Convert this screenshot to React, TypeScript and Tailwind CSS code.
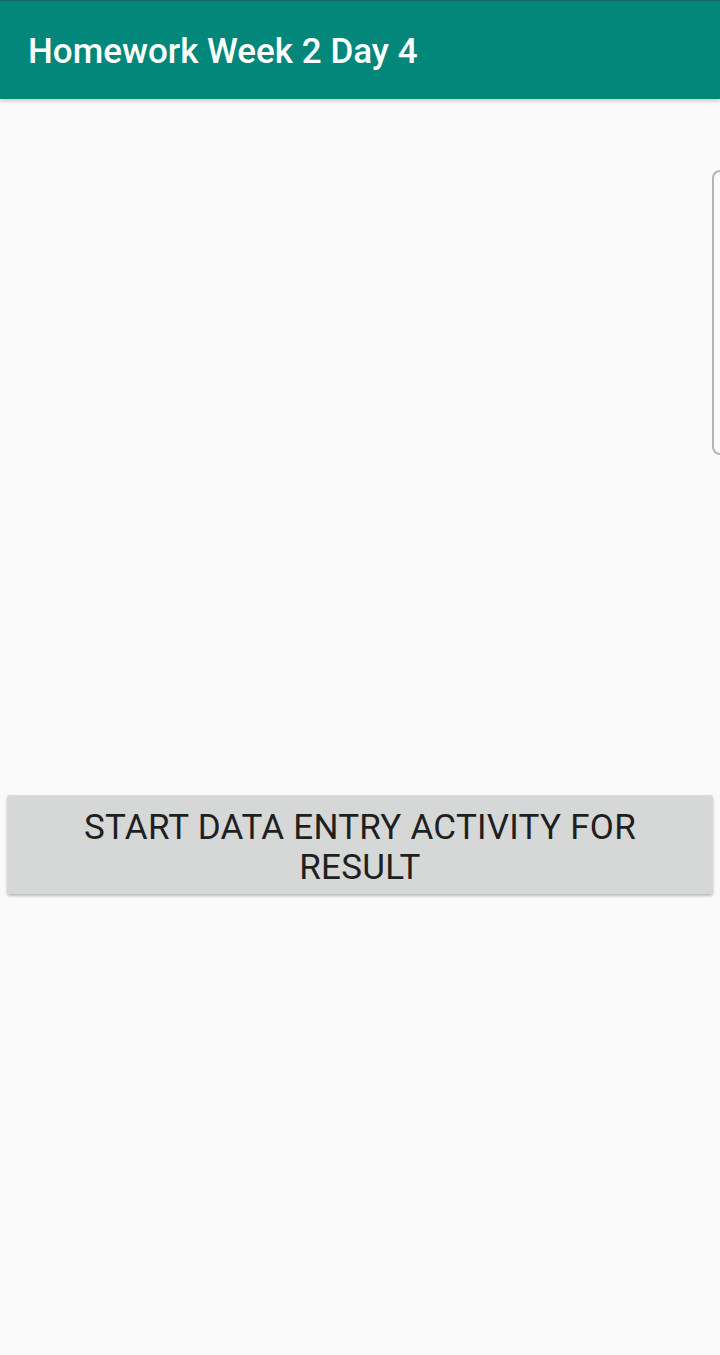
import React from "react";

export default function App() {
  return (
    <div className="relative w-[720px] h-[1355px] bg-[#fafafa] overflow-hidden flex flex-col" style={{ fontFamily: "Roboto, 'Noto Sans', sans-serif" }}>
      <div className="h-[99px] bg-[#02877a] border-t border-[#1a6a61] flex items-center pl-[28px] shadow-[0_2px_4px_rgba(0,0,0,0.2)] z-10 shrink-0">
        <span className="text-white text-[35px] font-medium leading-none pt-[2px]">Homework Week 2 Day 4</span>
      </div>
      <div className="flex-1 flex flex-col">
        <div className="h-[696px]" />
        <div className="px-[7px]">
          <button className="w-full h-[99px] bg-[#d6d7d7] rounded-[3px] shadow-[0_2px_3px_rgba(0,0,0,0.25)] text-[#1f1f1f] text-[35px] font-normal tracking-[0.25px] leading-[40px] uppercase px-[40px] pt-[6px] flex items-center justify-center text-center">
            START DATA ENTRY ACTIVITY FOR RESULT
          </button>
        </div>
      </div>
      <div className="absolute right-0 top-[170px] w-[8px] h-[285px] border-l-2 border-y-2 border-[#b5b5b5] rounded-l-[8px]" />
    </div>
  );
}
